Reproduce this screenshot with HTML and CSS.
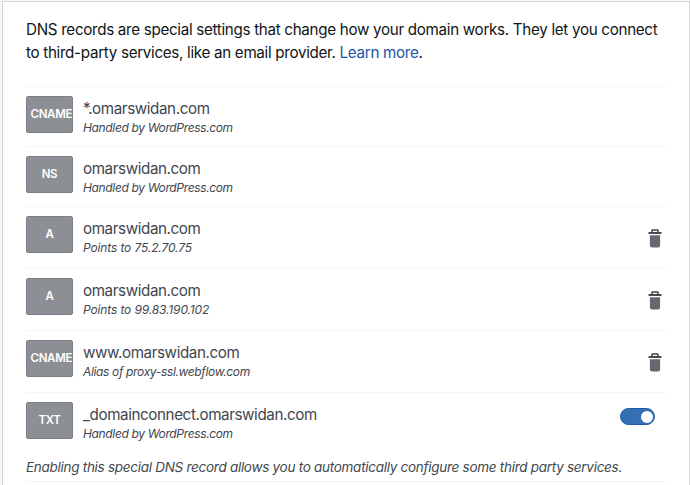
FILE: index.html
```html
<!DOCTYPE html>
<html lang="en">
<head>
<meta charset="utf-8">
<title>DNS records</title>
<link rel="stylesheet" href="styles.css">
</head>
<body>
<svg width="0" height="0" class="defs" aria-hidden="true">
  <symbol id="trash" viewBox="0 0 14 19">
    <path class="lid" d="M4 3V1.6Q4 1 4.6 1h4.8q.6 0 .6.6V3" />
    <path class="rim" d="M.5 3.1h13v1.8H.5z" />
    <path class="can" d="M1.9 6.2h10.2v10q0 2.3-2.2 2.3H4.1q-2.2 0-2.2-2.3z" />
  </symbol>
</svg>
<main class="card">
  <p class="intro">DNS records are special settings that change how your domain works. They let you connect<br>to third-party services, like an email provider. <a>Learn more</a>.</p>
  <ul class="records">
    <li class="record">
      <div class="type">CNAME</div>
      <div class="info"><strong>*.omarswidan.com</strong><em>Handled by WordPress.com</em></div>
    </li>
    <li class="record">
      <div class="type">NS</div>
      <div class="info"><strong>omarswidan.com</strong><em>Handled by WordPress.com</em></div>
    </li>
    <li class="record tall">
      <div class="type">A</div>
      <div class="info"><strong>omarswidan.com</strong><em class="ip">Points to 75.2.70.75</em></div>
      <svg class="trash"><use href="#trash"/></svg>
    </li>
    <li class="record tall">
      <div class="type">A</div>
      <div class="info"><strong>omarswidan.com</strong><em class="ip">Points to 99.83.190.102</em></div>
      <svg class="trash"><use href="#trash"/></svg>
    </li>
    <li class="record tall">
      <div class="type">CNAME</div>
      <div class="info"><strong>www.omarswidan.com</strong><em>Alias of proxy-ssl.webflow.com</em></div>
      <svg class="trash"><use href="#trash"/></svg>
    </li>
    <li class="record last">
      <div class="type">TXT</div>
      <div class="info"><strong>_domainconnect.omarswidan.com</strong><em>Handled by WordPress.com</em></div>
      <span class="toggle"></span>
      <p class="note">Enabling this special DNS record allows you to automatically configure some third party services.</p>
    </li>
  </ul>
</main>
</body>
</html>
```
FILE: styles.css
```css
* { box-sizing: border-box; }
body {
  margin: 0;
  height: 485px;
  overflow: hidden;
  background: #f6f7f7;
  font-family: Inter, "Liberation Sans", sans-serif;
  color: #41474e;
}
.defs { position: absolute; }
.card {
  margin: 1px 0 0 2px;
  width: 688px;
  height: 500px;
  padding: 16px 23px 0;
  background: #fff;
  border: 1px solid #d3d4d6;
}
.intro {
  margin: 0 0 22px;
  font-size: 15.2px;
  line-height: 23px;
  letter-spacing: -0.31px;
  color: #101517;
  white-space: nowrap;
}
.intro a { color: #1d55a5; }
.records {
  width: 640px;
  margin: 0;
  padding: 0;
  list-style: none;
  border-bottom: 1px solid #f3f4f5;
}
.record {
  display: flex;
  flex-wrap: wrap;
  align-content: flex-start;
  height: 60px;
  padding-top: 9px;
  border-top: 1px solid #f6f6f7;
}
.record.tall { height: 62px; }
.record.last { height: 89px; }
.type {
  width: 47px;
  height: 37px;
  padding: 0 3.5px;
  border: 1px solid #7c8086;
  border-radius: 2px;
  background: #8c8f94;
  color: #fff;
  font-size: 11.5px;
  font-weight: 600;
  line-height: 34px;
  letter-spacing: -0.3px;
  text-align: center;
  white-space: nowrap;
}
.info { display: flex; flex-direction: column; margin-left: 10px; white-space: nowrap; }
.info strong {
  font-size: 15.2px;
  font-weight: 400;
  line-height: 25px;
  letter-spacing: -0.4px;
}
.info em { font-size: 12px; line-height: 14px; letter-spacing: -0.35px; }
.info .ip { letter-spacing: -0.13px; }
.trash { width: 14px; height: 19px; margin: 13px 4px 0 auto; }
.lid { fill: none; stroke: #3c434a; stroke-width: 1.5; }
.rim { fill: #32373f; }
.can { fill: #646970; }
.toggle {
  width: 35px;
  height: 17px;
  margin: 6px 11px 0 auto;
  padding: 1.5px 1px;
  border: 1px solid #1d5aa8;
  border-radius: 9px;
  background: #3370b3;
}
.toggle::before {
  content: "";
  display: block;
  width: 12px;
  height: 12px;
  margin-left: auto;
  border-radius: 50%;
  background: #fff;
}
.note {
  width: 100%;
  margin: 16px 0 0;
  font-size: 13.5px;
  font-style: italic;
  line-height: 21px;
  letter-spacing: -0.28px;
  white-space: nowrap;
}
```
